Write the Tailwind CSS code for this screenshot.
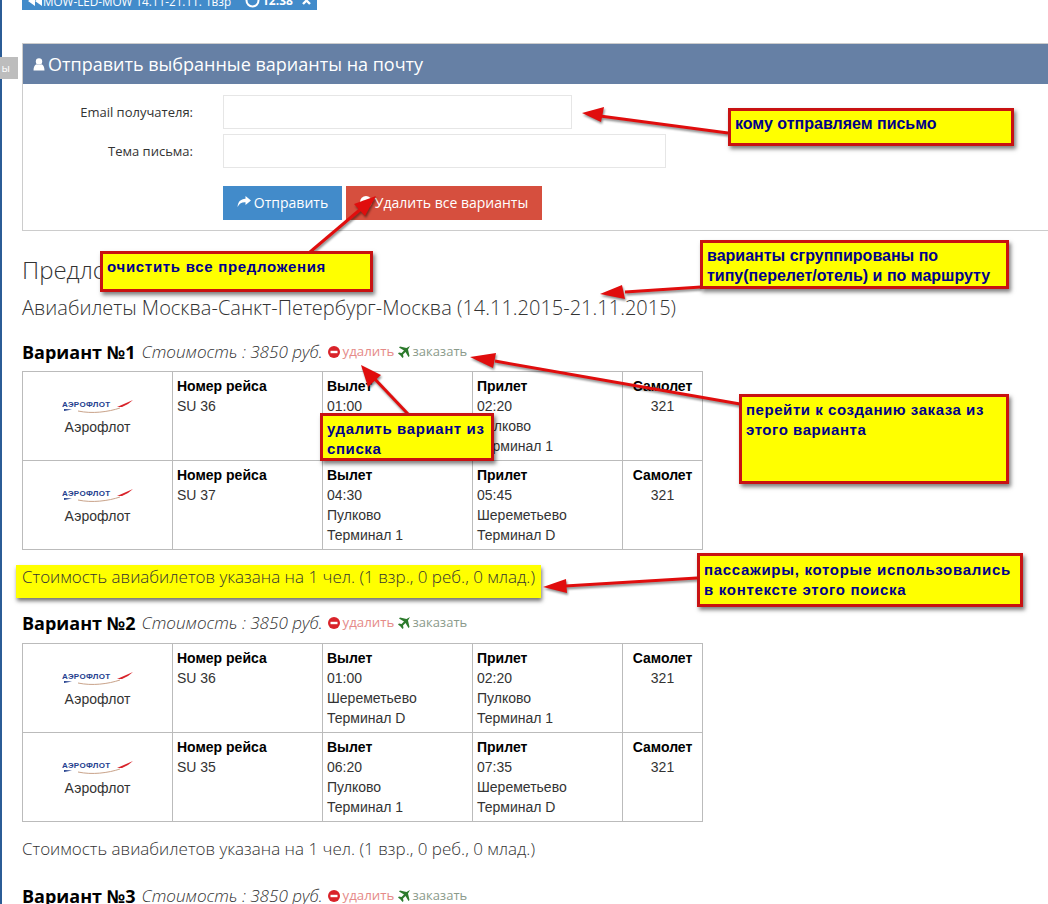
<!DOCTYPE html>
<html lang="en">
<head>
  <meta charset="UTF-8">
  <title>Отправить варианты</title>
  <script src="https://cdn.jsdelivr.net/npm/@tailwindcss/browser@4"></script>
</head>
<body class="relative h-[904px] overflow-hidden bg-white font-['Open_Sans',sans-serif] text-[#333]">
  <!-- left edge of the window -->
  <div class="absolute left-0 top-0 h-full w-[2px] bg-[#2b5c96]"></div>
  <div class="absolute left-0 top-[57px] flex h-[22px] w-[18px] items-center justify-end bg-[#bdbdbd] pr-[8px] text-[11px] text-white">ы</div>

  <main class="pl-[22px]">
    <!-- selected search tag, cut by the top of the picture -->
    <div class="flex h-[10px] w-[295px] items-start overflow-hidden bg-[#428bca] pl-[6px] text-[11.7px] leading-[14px] text-white">
      <div class="-mt-[7px] flex items-center">
        <svg width="14" height="10" viewBox="0 0 14 10" fill="white"><path d="M7 0 V10 L0 5 Z M14 0 V10 L7 5 Z"/></svg>
        <span class="ml-[1px] w-[202px] whitespace-nowrap">MOW-LED-MOW 14.11-21.11. 1взр</span>
        <svg width="15" height="15" viewBox="0 0 15 15" fill="none" stroke="white" stroke-width="2"><circle cx="7.5" cy="7.5" r="6"/></svg>
        <span class="ml-[2px] w-[40px] whitespace-nowrap text-[12px] font-bold">12:38</span>
        <svg width="9" height="9" viewBox="0 0 9 9" stroke="white" stroke-width="2.4"><path d="M1 1 L8 8 M8 1 L1 8"/></svg>
      </div>
    </div>

    <section class="mt-[33px] h-[188px] border border-[#ccc] border-r-0">
      <h2 class="flex h-[40px] items-center gap-[3px] bg-[#6680a5] pl-[10px] text-[18px] text-white">
        <svg class="h-[13px] w-[12px]" viewBox="0 0 12 13" fill="white"><circle cx="6" cy="3.5" r="3.2"/><path d="M0.5 12.5 C0.5 8.5 2 6.5 3.8 6.2 C5 7.2 7 7.2 8.2 6.2 C10 6.5 11.5 8.5 11.5 12.5 Z"/></svg>
        Отправить выбранные варианты на почту
      </h2>
      <div class="mt-[11px] flex items-center">
        <label class="w-[170px] pt-[2px] text-right text-[13px] text-[#333]">Email получателя:</label>
        <div class="ml-[30px] h-[34px] w-[349px] border border-[#e6e6e6]"></div>
      </div>
      <div class="mt-[5px] flex items-center">
        <label class="w-[170px] pt-[2px] text-right text-[13px] text-[#333]">Тема письма:</label>
        <div class="ml-[30px] h-[34px] w-[443px] border border-[#e6e6e6]"></div>
      </div>
      <div class="ml-[200px] mt-[18px] flex gap-[4px]">
        <button class="flex h-[34px] w-[119px] items-center justify-center gap-[3px] bg-[#428bca] pb-[2px] text-[14px] text-white">
          <svg class="h-[12px] w-[14px]" viewBox="0 0 14 12" fill="white"><path d="M8.5 0 L14 4.5 L8.5 9 V6.3 C5 6.1 2.5 7.2 0.6 11 C0.8 6 3.5 2.9 8.5 2.7 Z"/></svg>
          Отправить
        </button>
        <button class="flex h-[34px] w-[196px] items-center justify-center gap-[3px] bg-[#d64f3e] pb-[2px] text-[14px] text-white">
          <svg class="h-[12px] w-[12px]" viewBox="0 0 12 12"><circle cx="6" cy="6" r="6" fill="white"/><rect x="2.5" y="4.8" width="7" height="2.4" fill="#d64f3e"/></svg>
          Удалить все варианты
        </button>
      </div>
    </section>

    <h3 class="mt-[26px] text-[24px] font-light leading-[26px]">Предложения</h3>
    <h4 class="mt-[15px] whitespace-nowrap text-[20px] font-light leading-[20px]">Авиабилеты Москва-Санкт-Петербург-Москва (14.11.2015-21.11.2015)</h4>

    <div id="variants"></div>
  </main>

  <!-- annotations drawn over the page -->
  <svg class="pointer-events-none absolute left-0 top-0 drop-shadow-[1px_2px_1px_rgba(0,0,0,0.45)]" width="1048" height="904" fill="#e00d0d" stroke="#e00d0d">
    <g stroke-width="3">
      <line x1="728" y1="133" x2="600" y2="116"/>
      <line x1="310" y1="252" x2="362" y2="208"/>
      <line x1="701" y1="287" x2="625" y2="292"/>
      <line x1="408" y1="414" x2="372" y2="376"/>
      <line x1="740" y1="404" x2="495" y2="361"/>
      <line x1="697" y1="578" x2="565" y2="586"/>
    </g>
    <g stroke="none">
      <polygon points="582,113 604,107 601,122"/>
      <polygon points="376,196 365,216 354,204"/>
      <polygon points="600,294 622,285 625,299"/>
      <polygon points="361,365 381,375 368,387"/>
      <polygon points="470,357 496,353 493,368"/>
      <polygon points="543,587 566,579 567,593"/>
    </g>
  </svg>

  <div class="absolute left-[728px] top-[108px] h-[38px] w-[286px] border-[3px] border-[#c81212] bg-[#ffff00] pl-[4px] pt-[3px] font-['Liberation_Sans',sans-serif] text-[16px] font-bold leading-[20px] text-[#00008b] shadow-[2px_3px_4px_rgba(0,0,0,0.5)]">кому отправляем письмо</div>
  <div class="absolute left-[100px] top-[251px] h-[41px] w-[273px] border-[3px] border-[#c81212] bg-[#ffff00] pl-[4px] pt-[3px] font-['Liberation_Sans',sans-serif] text-[15px] font-bold leading-[20px] tracking-[0.7px] text-[#00008b] shadow-[2px_3px_4px_rgba(0,0,0,0.5)]">очистить все предложения</div>
  <div class="absolute left-[700px] top-[240px] h-[49px] w-[309px] border-[3px] border-[#c81212] bg-[#ffff00] pl-[4px] pt-[3px] font-['Liberation_Sans',sans-serif] text-[16px] font-bold leading-[20px] text-[#00008b] shadow-[2px_3px_4px_rgba(0,0,0,0.5)]">варианты сгруппированы по<br>типу(перелет/отель) и по маршруту</div>
  <div class="absolute left-[320px] top-[413px] h-[48px] w-[174px] border-[3px] border-[#c81212] bg-[#ffff00] pl-[4px] pt-[3px] font-['Liberation_Sans',sans-serif] text-[15px] font-bold leading-[20px] tracking-[0.6px] text-[#00008b] shadow-[2px_3px_4px_rgba(0,0,0,0.5)]">удалить вариант из<br>списка</div>
  <div class="absolute left-[739px] top-[394px] h-[90px] w-[270px] border-[3px] border-[#c81212] bg-[#ffff00] pl-[4px] pt-[3px] font-['Liberation_Sans',sans-serif] text-[15px] font-bold leading-[20px] tracking-[0.55px] text-[#00008b] shadow-[2px_3px_4px_rgba(0,0,0,0.5)]">перейти к созданию заказа из<br>этого варианта</div>
  <div class="absolute left-[697px] top-[553px] h-[54px] w-[326px] border-[3px] border-[#c81212] bg-[#ffff00] pl-[4px] pt-[4px] font-['Liberation_Sans',sans-serif] text-[15px] font-bold leading-[20px] tracking-[0.7px] text-[#00008b] shadow-[2px_3px_4px_rgba(0,0,0,0.5)]">пассажиры, которые использовались<br>в контексте этого поиска</div>

  <script>
    const variants = [
      { flights: [
        ['SU 36', '01:00', 'Шереметьево', 'Терминал D', '02:20', 'Пулково', 'Терминал 1'],
        ['SU 37', '04:30', 'Пулково', 'Терминал 1', '05:45', 'Шереметьево', 'Терминал D']
      ]},
      { flights: [
        ['SU 36', '01:00', 'Шереметьево', 'Терминал D', '02:20', 'Пулково', 'Терминал 1'],
        ['SU 35', '06:20', 'Пулково', 'Терминал 1', '07:35', 'Шереметьево', 'Терминал D']
      ]},
      { flights: [] }
    ];

    const logo = `
      <svg class="mx-auto" width="72" height="16" viewBox="0 0 72 16">
        <text x="0" y="8.5" font-family="Liberation Sans" font-weight="bold" font-size="8" letter-spacing="0.3" fill="#24408e">АЭРОФЛОТ</text>
        <path d="M55 9 L71 2 L66 6 L60 9 Z" fill="#d8232a"/>
        <path d="M2 11 L10 11.5 L2 13 Z" fill="#24408e"/>
        <path d="M16 13 C30 16 46 14 58 10" stroke="#c9a38a" fill="none"/>
      </svg>`;

    function flightRow(f) {
      return `
        <tr class="h-[89px] align-top">
          <td class="w-[150px] border border-[#bbb] px-[5px] pt-[26px] text-center">${logo}<div class="mt-[3px]">Аэрофлот</div></td>
          <td class="w-[150px] border border-[#bbb] px-[4px] pt-[4px]"><b class="text-black">Номер рейса</b><br>${f[0]}</td>
          <td class="w-[150px] border border-[#bbb] px-[4px] pt-[4px]"><b class="text-black">Вылет</b><br>${f[1]}<br>${f[2]}<br>${f[3]}</td>
          <td class="w-[150px] border border-[#bbb] px-[4px] pt-[4px]"><b class="text-black">Прилет</b><br>${f[4]}<br>${f[5]}<br>${f[6]}</td>
          <td class="w-[80px] border border-[#bbb] px-[4px] pt-[4px] text-center"><b class="text-black">Самолет</b><br>321</td>
        </tr>`;
    }

    function variantBlock(v, i) {
      const table = v.flights.length ? `
        <table class="${i === 0 ? 'mt-[9px]' : 'mt-[10px]'} w-[680px] table-fixed border-collapse font-['Liberation_Sans',sans-serif] text-[14px] leading-[20px] text-[#333]">
          ${v.flights.map(flightRow).join('')}
        </table>` : '';
      // the first note is highlighted in the picture
      const noteClass = i === 0
        ? 'relative -ml-[6px] mt-[15px] h-[33px] w-[525px] bg-[#ffff00] pl-[6px] pt-[1px] shadow-[1px_3px_4px_rgba(0,0,0,0.55)]'
        : 'mt-[16px] h-[22px]';
      const note = v.flights.length ? `
        <div class="${noteClass} whitespace-nowrap text-[17px] font-light leading-[22px]">Стоимость авиабилетов указана на 1 чел. (1 взр., 0 реб., 0 млад.)</div>` : '';
      return `
        <div class="${i === 0 ? 'mt-[24px]' : i === 1 ? 'mt-[15px]' : 'mt-[26px]'} flex h-[20px] items-center whitespace-nowrap">
          <b class="text-[18px] text-black">Вариант №${i + 1}</b>
          <i class="ml-[6px] text-[17.1px] font-light">Стоимость : 3850 руб.</i>
          <svg class="ml-[5px]" width="12" height="12" viewBox="0 0 12 12"><circle cx="6" cy="6" r="6" fill="#d9232a"/><rect x="2.5" y="4.8" width="7" height="2.4" fill="white"/></svg>
          <span class="ml-[3px] text-[13.3px] text-[#e58a88]">удалить</span>
          <svg class="ml-[4px]" width="12" height="12" viewBox="0 0 12 12" fill="#2c7a2c"><path d="M12 0 L8.5 2 L2 0.5 L1 1.5 L6 4.5 L3.5 7 L1 6.5 L0 7.5 L2.5 9.5 L4.5 12 L5.5 11 L5 8.5 L7.5 6 L10.5 11 L11.5 10 L10 3.5 Z"/></svg>
          <span class="ml-[2px] text-[13px] text-[#8a9a8a]">заказать</span>
        </div>
        ${table}
        ${note}`;
    }

    document.getElementById('variants').innerHTML = variants.map(variantBlock).join('');
  </script>
</body>
</html>
